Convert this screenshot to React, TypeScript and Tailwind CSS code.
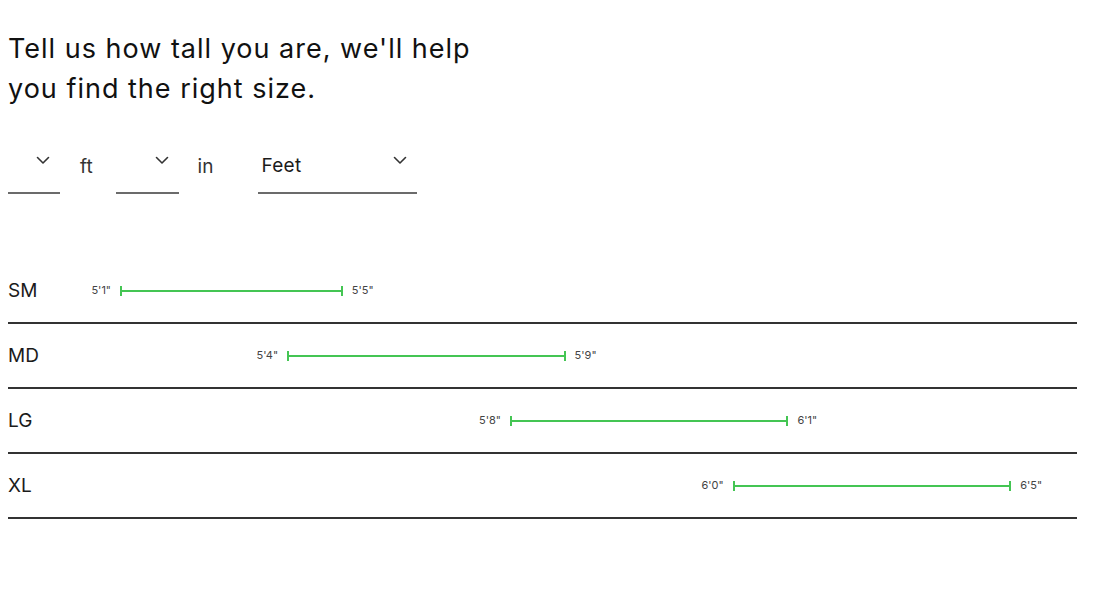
import React from "react";

const rows = [
  { label: "SM", lo: 61, hi: 65, loT: "5'1\"", hiT: "5'5\"" },
  { label: "MD", lo: 64, hi: 69, loT: "5'4\"", hiT: "5'9\"" },
  { label: "LG", lo: 68, hi: 73, loT: "5'8\"", hiT: "6'1\"" },
  { label: "XL", lo: 72, hi: 77, loT: "6'0\"", hiT: "6'5\"" },
];

const PX = 55.7;
const x = (h: number) => 112 + (h - 61) * PX;

function Chevron() {
  return (
    <svg width="14" height="9" viewBox="0 0 14 9" fill="none" stroke="#333" strokeWidth="1.6" strokeLinecap="round" strokeLinejoin="round">
      <path d="M1.5 1.5 L7 7 L12.5 1.5" />
    </svg>
  );
}

function Sel({ w, text }: { w: string; text?: string }) {
  return (
    <div className={`${w} h-[45px] border-b-2 border-[#6b6b6b] flex items-start justify-between pt-[5px] pl-[3px] pr-[10px]`}>
      <span className="text-[19px] leading-[24px] text-[#1b1b1b] tracking-[0.3px]">{text ?? ""}</span>
      <span className="mt-[2px]"><Chevron /></span>
    </div>
  );
}

export default function App() {
  return (
    <div className="w-[1111px] h-[606px] bg-white pl-[8px] pt-[29px]" style={{ fontFamily: "Inter, 'Liberation Sans', sans-serif" }}>
      <h1 className="text-[27px] leading-[40px] text-[#111] font-normal tracking-[1px]">
        Tell us how tall you are, we'll help
        <br />
        you find the right size.
      </h1>
      <div className="flex items-start mt-[40px]">
        <Sel w="w-[52px]" />
        <span className="ml-[20px] mt-[6px] text-[19px] leading-[24px] text-[#333]">ft</span>
        <div className="ml-[23px]"><Sel w="w-[63px]" /></div>
        <span className="ml-[19px] mt-[6px] text-[19px] leading-[24px] text-[#333]">in</span>
        <div className="ml-[45px]"><Sel w="w-[159px]" text="Feet" /></div>
      </div>
      <div className="w-[1069px] mt-[65px]">
        {rows.map((r) => (
          <div key={r.label} className="relative h-[65px] border-b-2 border-[#333] flex items-center">
            <span className="text-[19px] text-[#1b1b1b] leading-none">{r.label}</span>
            <div
              className="absolute top-[31px] h-[2px] bg-[#44c553]"
              style={{ left: x(r.lo), width: x(r.hi) - x(r.lo) }}
            >
              <div className="absolute left-0 top-[-4px] w-[2px] h-[10px] bg-[#44c553]" />
              <div className="absolute right-0 top-[-4px] w-[2px] h-[10px] bg-[#44c553]" />
              <span className="absolute right-full mr-[9px] top-[-7px] text-[11px] leading-[14px] text-[#444] whitespace-nowrap">{r.loT}</span>
              <span className="absolute left-full ml-[9px] top-[-7px] text-[11px] leading-[14px] text-[#444] whitespace-nowrap">{r.hiT}</span>
            </div>
          </div>
        ))}
      </div>
    </div>
  );
}
